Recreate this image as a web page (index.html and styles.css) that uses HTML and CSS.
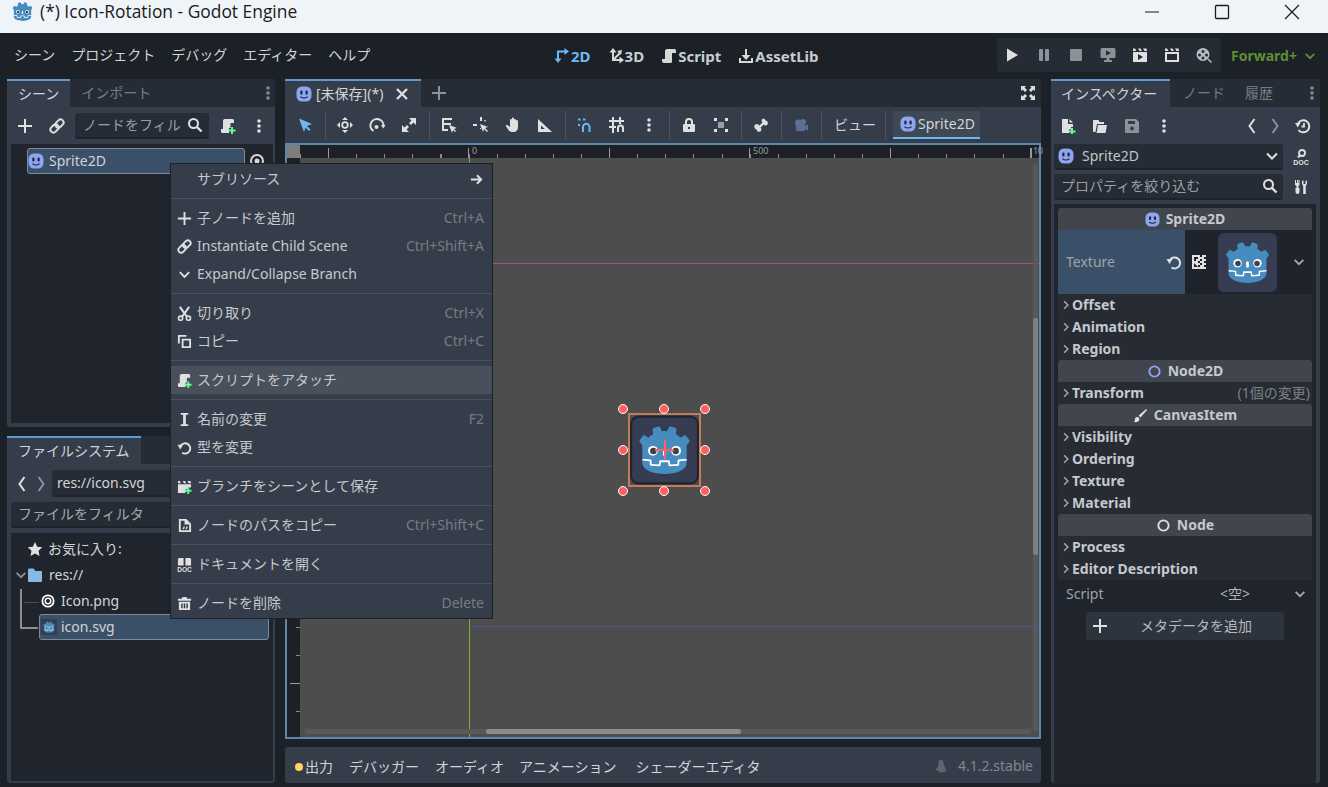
FILE: index.html
```html
<!DOCTYPE html>
<html lang="ja">
<head>
<meta charset="utf-8">
<title>(*) Icon-Rotation - Godot Engine</title>
<link rel="stylesheet" href="styles.css">
</head>
<body>
<svg class="defs" aria-hidden="true">
  <defs>
    <symbol id="godot" viewBox="0 0 128 128">
      <g transform="scale(.101) translate(122 122)">
        <g fill="#fff">
          <path d="M105 673v33q407 354 814 0v-33z"/>
          <path fill="#478cbf" d="m105 673 152 14q12 1 15 14l4 67 132 10 8-61q2-11 15-15h162q13 4 15 15l8 61 132-10 4-67q3-13 15-14l152-14V427q30-39 56-81-35-59-83-108-43 20-82 47-40-37-88-64 7-51 8-102-59-28-123-42-26 43-46 89-49-7-98 0-20-46-46-89-64 14-123 42 1 51 8 102-48 27-88 64-39-27-82-47-48 49-83 108 26 42 56 81zm0 33v39c0 276 813 276 814 0v-39l-134 12-5 69q-2 10-14 13l-162 11q-12 0-16-11l-10-65H446l-10 65q-4 11-16 11l-162-11q-12-3-14-13l-5-69z"/>
          <path d="M483 600c0 34 58 34 58 0v-86c0-34-58-34-58 0z"/>
          <circle cx="725" cy="526" r="90"/>
          <circle cx="299" cy="526" r="90"/>
        </g>
        <g fill="#414042"><circle cx="307" cy="532" r="60"/><circle cx="717" cy="532" r="60"/></g>
      </g>
    </symbol>
    <symbol id="sprite" viewBox="0 0 16 16">
      <rect x=".5" y=".5" width="15" height="15" rx="5.500" fill="#8da5f3"/>
      <rect x="4.300" y="4.500" width="2.200" height="4" rx="1.100" fill="#20252d"/>
      <rect x="9.500" y="4.500" width="2.200" height="4" rx="1.100" fill="#20252d"/>
      <path d="M4.400 10.600q3.600 2.800 7.200 0" fill="none" stroke="#20252d" stroke-width="1.200"/>
    </symbol>
    <symbol id="plus" viewBox="0 0 16 16"><path fill="currentColor" d="M7 1h2v6h6v2H9v6H7V9H1V7h6z"/></symbol>
    <symbol id="link" viewBox="0 0 16 16"><g transform="rotate(-45 8 8)" fill="none" stroke="currentColor" stroke-width="2"><rect x="0" y="5" width="9" height="6" rx="3"/><rect x="7" y="5" width="9" height="6" rx="3"/></g></symbol>
    <symbol id="search" viewBox="0 0 16 16"><circle cx="6.500" cy="6.500" r="4.500" fill="none" stroke="currentColor" stroke-width="2"/><path d="M10 10l4.500 4.500" stroke="currentColor" stroke-width="2.400"/></symbol>
    <symbol id="dots" viewBox="0 0 16 16"><circle cx="8" cy="3" r="1.800" fill="currentColor"/><circle cx="8" cy="8" r="1.800" fill="currentColor"/><circle cx="8" cy="13" r="1.800" fill="currentColor"/></symbol>
    <symbol id="script" viewBox="0 0 16 16"><path fill="currentColor" d="M6 1h7.500A1.500 1.500 0 0 1 15 2.500V5h-4v8.500a1.500 1.500 0 0 1-1.500 1.500H3a2 2 0 0 1-2-2V11h3V3a2 2 0 0 1 2-2z"/></symbol>
    <symbol id="script-add" viewBox="0 0 16 16"><path fill="currentColor" d="M5 1h7.500A1.500 1.500 0 0 1 14 2.500V5h-3.500v5H9v5H2.500A1.500 1.500 0 0 1 1 13.500V11h2V3a2 2 0 0 1 2-2z"/><path fill="#5fff8f" d="M11 9h2v2.500h2.500v2H13V16h-2v-2.500H8.500v-2H11z"/></symbol>
    <symbol id="eye" viewBox="0 0 16 16"><circle cx="8" cy="8" r="6" fill="none" stroke="currentColor" stroke-width="2"/><circle cx="8" cy="8" r="2.500" fill="currentColor"/></symbol>
    <symbol id="select" viewBox="0 0 16 16"><path fill="#6bb8f5" d="M2 1.500 15 7l-5 2 3.500 3.500-1.500 1.500L8.500 10.500 7 15z"/></symbol>
    <symbol id="move" viewBox="0 0 16 16"><path fill="currentColor" d="M8 0l3 3H5zM8 16l-3-3h6zM0 8l3-3v6zM16 8l-3 3V5z"/><circle cx="8" cy="8" r="2.800" fill="none" stroke="currentColor" stroke-width="1.800"/></symbol>
    <symbol id="rotate" viewBox="0 0 16 16"><path d="M4.500 14A6.500 6.500 0 1 1 14.400 9.500" fill="none" stroke="currentColor" stroke-width="2"/><path fill="currentColor" d="M12 8h4.500l-2.200 3.500z"/><circle cx="7.500" cy="10" r="2" fill="currentColor"/></symbol>
    <symbol id="scale" viewBox="0 0 16 16"><path fill="currentColor" d="M8 1h7v7l-2.500-2.500L10 8 8 6l2.500-2.500zM8 15H1V8l2.500 2.500L6 8l2 2-2.500 2.500z"/></symbol>
    <symbol id="list" viewBox="0 0 16 16"><path fill="currentColor" d="M1 1h10v2H3v3h7v2H3v4h4v2H1z"/><path fill="currentColor" d="M8 8l8 3-3 1 2 2-1 1-2-2-1 3z"/></symbol>
    <symbol id="pivot" viewBox="0 0 16 16"><path fill="currentColor" d="M7 0h2v4H7zM0 7h4v2H0zM7 11h1v1H7z"/><path fill="currentColor" d="M7 7l8 3-3 1 3 3-1 1-3-3-1 3z"/><path fill="currentColor" d="M11 3l2 0-1 2z"/></symbol>
    <symbol id="hand" viewBox="0 0 16 16"><path fill="currentColor" d="M5 3a1 1 0 0 1 2 0V1.500a1 1 0 0 1 2 0V3a1 1 0 0 1 2 0v1a1 1 0 0 1 2 0v6.500c0 2.500-2 4.500-4.500 4.500H7c-1.500 0-2.500-.6-3.300-1.700L1 9.500c-.6-1 .9-2 1.700-1.200L5 10z"/></symbol>
    <symbol id="ruler" viewBox="0 0 16 16"><path fill="currentColor" fill-rule="evenodd" d="M1 2l14 13H1zM4 8.500V12h3.800z"/></symbol>
    <symbol id="snap" viewBox="0 0 16 16"><path d="M6 15V10a3 3 0 0 1 6.500 0v5" fill="none" stroke="#6bb8f5" stroke-width="2"/><path fill="#6bb8f5" d="M1 1.500h2.500v2H1zM6 1.500h2.500v2H6zM1 7h2v2H1z"/></symbol>
    <symbol id="grid" viewBox="0 0 16 16"><path fill="currentColor" d="M3 0h2v3h5V0h2v3h3v2h-3v2h-2V5H5v4h2v2H5v5H3v-5H0V9h3V5H0V3h3z"/><path d="M9 15v-4a2.500 2.500 0 0 1 5 0v4" fill="none" stroke="currentColor" stroke-width="2"/></symbol>
    <symbol id="lock" viewBox="0 0 16 16"><path fill="currentColor" fill-rule="evenodd" d="M4 7V5a4 4 0 0 1 8 0v2h1a1 1 0 0 1 1 1v6a1 1 0 0 1-1 1H3a1 1 0 0 1-1-1V8a1 1 0 0 1 1-1zM6 7h4V5a2 2 0 0 0-4 0zM7 10v2h2v-2z"/></symbol>
    <symbol id="group" viewBox="0 0 16 16"><path fill="currentColor" d="M1 1h3v3H1zM12 1h3v3h-3zM1 12h3v3H1zM12 12h3v3h-3z"/><path fill="currentColor" opacity=".6" d="M5 5h6v6H5z"/></symbol>
    <symbol id="bone" viewBox="0 0 16 16"><path fill="currentColor" d="M10.500 1.500a2.500 2.500 0 0 1 2 2 2.500 2.500 0 0 1 1 4.700c-1 .5-2.200.1-2.800-.7L7.500 10.700c.8.600 1.200 1.800.7 2.800a2.500 2.500 0 0 1-4.700-1 2.500 2.500 0 0 1-2-2 2.500 2.500 0 0 1 4.700-1.800l3.300-3.200c-.8-.6-1.200-1.800-.7-2.800a2.500 2.500 0 0 1 1.700-1.200z"/></symbol>
    <symbol id="camera" viewBox="0 0 16 16"><g fill="#5d6e96"><circle cx="5.500" cy="6" r="3.500"/><circle cx="10" cy="5" r="3"/><rect x="3" y="7" width="9" height="7" rx="1"/><path d="M12 9l3-1.500v6L12 12z"/></g></symbol>
    <symbol id="i2d" viewBox="0 0 16 16"><path fill="none" stroke="#6bb8f5" stroke-width="2" d="M4 12V3.500h8"/><path fill="#6bb8f5" d="M0.500 10.500h7L4 15zM10.500 0l4.500 3.500-4.500 3.500z"/></symbol>
    <symbol id="i3d" viewBox="0 0 16 16"><path fill="none" stroke="currentColor" stroke-width="2" d="M5 3v9h8M5 12l7-7"/><path fill="currentColor" d="M5 0l3.500 4.500h-7zM16 12l-4.500 3.500v-7zM14 2l-1 5-4-4z"/></symbol>
    <symbol id="asset" viewBox="0 0 16 16"><path fill="currentColor" d="M7 1h2v6h3.500L8 12 3.500 7H7zM1 10h2v3h10v-3h2v5H1z"/></symbol>
    <symbol id="full" viewBox="0 0 16 16"><path fill="currentColor" d="M1 1h5L4.500 2.500 7 5 5 7 2.500 4.500 1 6zM15 1v5l-1.500-1.500L11 7 9 5l2.500-2.500L10 1zM1 15v-5l1.500 1.500L5 9l2 2-2.500 2.500L6 15zM15 15h-5l1.500-1.500L9 11l2-2 2.500 2.500L15 10z"/></symbol>
    <symbol id="play" viewBox="0 0 16 16"><path fill="currentColor" d="M3 1.500v13L14 8z"/></symbol>
    <symbol id="pause" viewBox="0 0 16 16"><rect x="3" y="2" width="4" height="12" rx="1" fill="currentColor"/><rect x="9" y="2" width="4" height="12" rx="1" fill="currentColor"/></symbol>
    <symbol id="stop" viewBox="0 0 16 16"><rect x="2" y="2" width="12" height="12" rx="1" fill="currentColor"/></symbol>
    <symbol id="remote" viewBox="0 0 16 16"><path fill="currentColor" fill-rule="evenodd" d="M2 1h12a1.500 1.500 0 0 1 1.500 1.500v7A1.500 1.500 0 0 1 14 11H9.500v2H12v2H4v-2h2.500v-2H2A1.500 1.500 0 0 1 .5 9.500v-7A1.500 1.500 0 0 1 2 1zM6 3.500v5L11 6z"/></symbol>
    <symbol id="pscene" viewBox="0 0 16 16"><path fill="currentColor" fill-rule="evenodd" d="M1 5h14v10H1zM6 7v6l5-3z"/><path fill="currentColor" d="M1 1.500h2l1.500 2.500H1zM6 1.500h2.500L10 4H7.500zM11 1.500h3.500L15 4h-2.500z"/></symbol>
    <symbol id="pcustom" viewBox="0 0 16 16"><path fill="currentColor" fill-rule="evenodd" d="M1 5h14v10H1zM3 7v6h10V7z"/><path fill="currentColor" d="M1 1.500h2l1.500 2.500H1zM6 1.500h2.500L10 4H7.500zM11 1.500h3.500L15 4h-2.500z"/></symbol>
    <symbol id="movie" viewBox="0 0 16 16"><path fill="currentColor" fill-rule="evenodd" d="M7 1a6.500 6.500 0 1 1 0 13A6.500 6.500 0 0 1 7 1zM7 3a1.500 1.500 0 1 0 0 3 1.500 1.500 0 0 0 0-3zM3.500 6.500a1.500 1.500 0 1 0 0 3 1.500 1.500 0 0 0 0-3zM10.500 6.500a1.500 1.500 0 1 0 0 3 1.500 1.500 0 0 0 0-3zM7 9.500a1.500 1.500 0 1 0 0 3 1.500 1.500 0 0 0 0-3z"/><path stroke="currentColor" stroke-width="1.500" d="M12 12l3.500 3.500"/></symbol>
    <symbol id="down" viewBox="0 0 16 16"><path fill="none" stroke="currentColor" stroke-width="2" d="M3 5.500l5 5 5-5"/></symbol>
    <symbol id="small-right" viewBox="0 0 16 16"><path fill="none" stroke="currentColor" stroke-width="2" d="M5.500 3l5 5-5 5"/></symbol>
    <symbol id="back" viewBox="0 0 16 16"><path fill="none" stroke="currentColor" stroke-width="2" d="M10.500 1 5.500 8l5 7"/></symbol>
    <symbol id="forward" viewBox="0 0 16 16"><path fill="none" stroke="currentColor" stroke-width="2" d="M5.500 1l5 7-5 7"/></symbol>
    <symbol id="newres" viewBox="0 0 16 16"><path fill="currentColor" d="M2 1h6v5h5v3h-2v2.500H9V15H2zM9.500 1 13 4.500H9.500z"/><path fill="#5fff8f" d="M11 10h2v2.500h2.500v2H13V16h-2v-1.500H9v-2h2z"/></symbol>
    <symbol id="folder" viewBox="0 0 16 16"><path fill="currentColor" d="M2 2h4.500l1 2H12v2H5L3.500 14H2a1 1 0 0 1-1-1V3a1 1 0 0 1 1-1zM6 7h9l-1.500 8H4.500z"/></symbol>
    <symbol id="save" viewBox="0 0 16 16"><path fill="currentColor" fill-rule="evenodd" d="M2 1h10l3 3v10a1 1 0 0 1-1 1H2a1 1 0 0 1-1-1V2a1 1 0 0 1 1-1zM4 3v3h7V3zM8 8.500a2 2 0 1 0 0 4 2 2 0 0 0 0-4z"/></symbol>
    <symbol id="history" viewBox="0 0 16 16"><path d="M3 5.500A6 6 0 1 1 3.500 12" fill="none" stroke="currentColor" stroke-width="2"/><path fill="currentColor" d="M0 5h5.500L2.800 9.500z"/><path d="M9 5v3.500H6.500" fill="none" stroke="currentColor" stroke-width="1.800"/></symbol>
    <symbol id="doc" viewBox="0 0 16 16"><circle cx="9" cy="4" r="3" fill="none" stroke="currentColor" stroke-width="1.800"/><path d="M6.800 6.500 5 8.500" stroke="currentColor" stroke-width="2"/><text x="8" y="15.500" text-anchor="middle" font-family="Liberation Sans" font-size="7" font-weight="700" fill="currentColor">DOC</text></symbol>
    <symbol id="tools" viewBox="0 0 16 16"><path fill="currentColor" d="M2 1h1v3h1V1h1v3h.5V1h1v5L5.500 7v2h1v4a2 2 0 0 1-4 0V9h1V7L2 6z"/><path fill="currentColor" d="M9.500 1.500h1V5h2V1.500h1c1 1.500.8 4-.7 5.200V15h-2.600V6.700C8.700 5.500 8.500 3 9.500 1.500z"/></symbol>
    <symbol id="reload" viewBox="0 0 16 16"><path d="M4 6a5.500 5.500 0 1 1 1.500 7.500" fill="none" stroke="currentColor" stroke-width="2"/><path fill="currentColor" d="M.5 5h6L3.500 10z"/></symbol>
    <symbol id="checker" viewBox="0 0 16 16"><path fill="currentColor" d="M1 1h8v2h2V1h4v2h-2v2h2v2h-2v2h2v2h-2v2h2v2H1z"/><path fill="#20252d" d="M3 3h4v2H5v2H3zM9 5h2v2H9zM7 7h2v2H7zM9 9h2v2H9zM7 11h2v2H7zM3 9l4 4H3z"/></symbol>
    <symbol id="scissors" viewBox="0 0 16 16"><path d="M3 1l8 11M13 1 5 12" stroke="currentColor" stroke-width="2.200" fill="none"/><circle cx="3.800" cy="13" r="2.200" fill="none" stroke="currentColor" stroke-width="1.800"/><circle cx="12.200" cy="13" r="2.200" fill="none" stroke="currentColor" stroke-width="1.800"/></symbol>
    <symbol id="copy" viewBox="0 0 16 16"><path fill="currentColor" fill-rule="evenodd" d="M1 1h9v2H3v7H1zM5 5h10v10H5zM7 7v6h6V7z"/></symbol>
    <symbol id="rename" viewBox="0 0 16 16"><path fill="currentColor" d="M4 1h8v2H9.500v10H12v2H4v-2h2.500V3H4z"/></symbol>
    <symbol id="instance" viewBox="0 0 16 16"><path fill="currentColor" d="M1 5.500h14V9h-3v2H9v4H1z"/><path fill="currentColor" d="M1 2h2l1.200 2.500H1zM6 2h2.500L10 4.500H7.500zM11 2h3.500l.5 2.500h-2.500z"/><path fill="#5fff8f" d="M11 9h2v2.500h2.500v2H13V16h-2v-2.500H8.500v-2H11z"/></symbol>
    <symbol id="copypath" viewBox="0 0 16 16"><path fill="currentColor" fill-rule="evenodd" d="M2 1h8l5 5v9H2zM4 3v10h9V7H8V3z"/><path fill="currentColor" d="M6 12l1-3h1.500l-1 3zM9 12l1-3h1.500l-1 3z"/></symbol>
    <symbol id="docs" viewBox="0 0 16 16"><path fill="currentColor" d="M2 1h5v8H1V2zM9 1h5l1 1v7H9z"/><text x="8" y="15.500" text-anchor="middle" font-family="Liberation Sans" font-size="7" font-weight="700" fill="currentColor">DOC</text></symbol>
    <symbol id="trash" viewBox="0 0 16 16"><path fill="currentColor" fill-rule="evenodd" d="M6 1h4l1 2h4v2H1V3h4zM2 6h12v9H2zM4.500 8v5h1.500V8zM7.200 8v5h1.600V8zM10 8v5h1.500V8z"/></symbol>
    <symbol id="star" viewBox="0 0 16 16"><path fill="currentColor" d="M8 1l2.200 4.700 5.100.6-3.800 3.500 1 5.100L8 12.400l-4.500 2.500 1-5.100L.7 6.300l5.100-.6z"/></symbol>
    <symbol id="dirs" viewBox="0 0 16 16"><path fill="#8ab8e0" d="M1 2.500A1 1 0 0 1 2 1.500h4.500l2 2.500H15v10a1 1 0 0 1-1 1H2a1 1 0 0 1-1-1z"/></symbol>
    <symbol id="target" viewBox="0 0 16 16"><circle cx="8" cy="8" r="7.500" fill="#fff"/><circle cx="8" cy="8" r="5.500" fill="#20252d"/><circle cx="8" cy="8" r="4" fill="#fff"/><circle cx="8" cy="8" r="2.400" fill="#20252d"/></symbol>
    <symbol id="ring" viewBox="0 0 16 16"><circle cx="8" cy="8" r="5.500" fill="none" stroke="currentColor" stroke-width="2"/></symbol>
    <symbol id="brush" viewBox="0 0 16 16"><path fill="currentColor" d="M14 1l1 1-7 8-2-2zM4.500 9.500a2.500 2.500 0 0 1 2.400 2.400C7 14 4 15.500 1 15c1-1 1-2 1-3a2.500 2.500 0 0 1 2.500-2.500z"/></symbol>
    <symbol id="bell" viewBox="0 0 16 16"><path fill="currentColor" d="M6 1c3-1 5 1 5 4 0 3 3 5 3 8-3 3-6 2-8 2-1-1-1-2-2-2-2 0-2-1-2-2 2-1 3-2 3-4 0-3 0-5 1-6z"/></symbol>
    <symbol id="min" viewBox="0 0 16 16"><path d="M1 8h14" stroke="currentColor" stroke-width="1"/></symbol>
    <symbol id="max" viewBox="0 0 16 16"><rect x="1.500" y="1.500" width="13" height="13" rx="1" fill="none" stroke="currentColor" stroke-width="1.300"/></symbol>
    <symbol id="close" viewBox="0 0 16 16"><path d="M1 1l14 14M15 1 1 15" stroke="currentColor" stroke-width="1.200"/></symbol>
    <symbol id="closex" viewBox="0 0 16 16"><path d="M3 3l10 10M13 3 3 13" stroke="currentColor" stroke-width="2.300"/></symbol>
    <symbol id="arrow-r" viewBox="0 0 16 16"><path fill="none" stroke="currentColor" stroke-width="2" d="M2 8h10M8.500 3.500 13 8l-4.500 4.500"/></symbol>
    <symbol id="godot-card" viewBox="0 0 128 128">
      <rect x="2" y="2" width="124" height="124" rx="14" fill="#363d52" stroke="#212532" stroke-width="4"/>
      <use href="#godot"/>
    </symbol>
  </defs>
</svg>

<header class="titlebar">
  <svg class="title-logo"><use href="#godot"/></svg>
  <span class="title-text">(*) Icon-Rotation - Godot Engine</span>
  <div class="window-buttons">
    <svg class="ic"><use href="#min"/></svg>
    <svg class="ic"><use href="#max"/></svg>
    <svg class="ic"><use href="#close"/></svg>
  </div>
</header>

<nav class="menubar">
  <div class="menus">
    <span class="menu">シーン</span><span class="menu">プロジェクト</span><span class="menu">デバッグ</span><span class="menu">エディター</span><span class="menu">ヘルプ</span>
  </div>
  <div class="workspaces">
    <span class="ws ws-on"><svg class="ic"><use href="#i2d"/></svg>2D</span>
    <span class="ws"><svg class="ic"><use href="#i3d"/></svg>3D</span>
    <span class="ws"><svg class="ic"><use href="#script"/></svg>Script</span>
    <span class="ws"><svg class="ic"><use href="#asset"/></svg>AssetLib</span>
  </div>
  <div class="runbar">
    <svg class="ic"><use href="#play"/></svg>
    <svg class="ic dim"><use href="#pause"/></svg>
    <svg class="ic dim"><use href="#stop"/></svg>
    <svg class="ic dim"><use href="#remote"/></svg>
    <svg class="ic"><use href="#pscene"/></svg>
    <svg class="ic"><use href="#pcustom"/></svg>
    <svg class="ic dim2"><use href="#movie"/></svg>
  </div>
  <div class="renderer"><span>Forward+</span><svg class="ic"><use href="#down"/></svg></div>
</nav>

<main class="main">
  <section class="col-left">
    <div class="dock scene-dock">
      <div class="tabs">
        <span class="tab tab-on">シーン</span><span class="tab">インポート</span>
        <svg class="ic tab-dots"><use href="#dots"/></svg>
      </div>
      <div class="dock-body">
        <div class="scene-tools">
          <svg class="ic"><use href="#plus"/></svg>
          <svg class="ic"><use href="#link"/></svg>
          <div class="field scene-filter"><span>ノードをフィル</span><svg class="ic"><use href="#search"/></svg></div>
          <svg class="ic"><use href="#script-add"/></svg>
          <svg class="ic scene-more"><use href="#dots"/></svg>
        </div>
        <div class="tree scene-tree">
          <div class="row-sel scene-row"><svg class="ic"><use href="#sprite"/></svg><span>Sprite2D</span></div>
          <svg class="ic scene-eye"><use href="#eye"/></svg>
        </div>
      </div>
    </div>
    <div class="dock fs-dock">
      <div class="tabs">
        <span class="tab tab-on">ファイルシステム</span>
      </div>
      <div class="dock-body">
        <div class="path-row">
          <svg class="ic"><use href="#back"/></svg>
          <svg class="ic dim"><use href="#forward"/></svg>
          <div class="field path-field"><span>res://icon.svg</span></div>
        </div>
        <div class="field fs-filter"><span>ファイルをフィルタ</span></div>
        <div class="tree fs-tree">
          <div class="fs-row fs-fav"><svg class="ic"><use href="#star"/></svg><span>お気に入り:</span></div>
          <div class="fs-row fs-res"><svg class="ic dim fs-arrow"><use href="#down"/></svg><svg class="ic fs-dir"><use href="#dirs"/></svg><span>res://</span></div>
          <div class="fs-row fs-file"><svg class="ic fs-target"><use href="#target"/></svg><span>Icon.png</span></div>
          <div class="row-sel fs-file-sel"><span class="mini-thumb"><svg><use href="#godot"/></svg></span><span>icon.svg</span></div>
          <i class="tline tline-v"></i><i class="tline tline-h"></i><i class="tline tline-dim"></i>
        </div>
      </div>
    </div>
  </section>

  <section class="col-center">
    <div class="dock editor-dock">
      <div class="tabs">
        <span class="tab tab-on tab-file"><svg class="ic"><use href="#sprite"/></svg><span>[未保存](*)</span><svg class="ic tab-close"><use href="#closex"/></svg></span>
        <svg class="ic tab-plus"><use href="#plus"/></svg>
        <svg class="ic tab-full"><use href="#full"/></svg>
      </div>
      <div class="toolbar">
        <svg class="ic"><use href="#select"/></svg><i class="sep"></i>
        <svg class="ic"><use href="#move"/></svg>
        <svg class="ic"><use href="#rotate"/></svg>
        <svg class="ic"><use href="#scale"/></svg><i class="sep"></i>
        <svg class="ic"><use href="#list"/></svg>
        <svg class="ic"><use href="#pivot"/></svg>
        <svg class="ic"><use href="#hand"/></svg>
        <svg class="ic"><use href="#ruler"/></svg><i class="sep"></i>
        <svg class="ic"><use href="#snap"/></svg>
        <svg class="ic"><use href="#grid"/></svg>
        <svg class="ic"><use href="#dots"/></svg><i class="sep"></i>
        <svg class="ic"><use href="#lock"/></svg>
        <svg class="ic"><use href="#group"/></svg><i class="sep"></i>
        <svg class="ic"><use href="#bone"/></svg><i class="sep"></i>
        <svg class="ic"><use href="#camera"/></svg><i class="sep"></i>
        <span class="view-btn">ビュー</span><i class="sep"></i>
        <span class="sprite-btn"><svg class="ic"><use href="#sprite"/></svg>Sprite2D</span>
      </div>
      <div class="viewport">
        <div class="ruler-row">
          <div class="ruler-corner"></div>
          <div class="ruler-top">
            <span class="rlabel rl0">0</span><span class="rlabel rl500">500</span><span class="rlabel rl1000">10</span>
          </div>
        </div>
        <div class="canvas-row">
          <div class="ruler-left"></div>
          <div class="canvas">
            <i class="axis-x"></i><i class="axis-y"></i><i class="frame-b"></i>
            <div class="vscroll"><i></i></div>
            <div class="hscroll"><i></i></div>
            <div class="gizmo">
              <div class="gizmo-box"><svg class="gizmo-icon"><use href="#godot-card"/></svg></div>
              <i class="cross-h"></i><i class="cross-v"></i>
              <i class="h h1"></i><i class="h h2"></i><i class="h h3"></i><i class="h h4"></i><i class="h h5"></i><i class="h h6"></i><i class="h h7"></i><i class="h h8"></i>
            </div>
          </div>
        </div>
      </div>
    </div>
    <div class="bottom-bar">
      <i class="dot"></i><span class="btab">出力</span><span class="btab">デバッガー</span><span class="btab">オーディオ</span><span class="btab btab-anim">アニメーション</span><span class="btab btab-shader">シェーダーエディタ</span>
      <span class="version"><svg class="ic"><use href="#bell"/></svg><span>4.1.2.stable</span></span>
    </div>
  </section>

  <section class="col-right dock">
    <div class="tabs">
      <span class="tab tab-on">インスペクター</span><span class="tab">ノード</span><span class="tab">履歴</span>
      <svg class="ic tab-dots"><use href="#dots"/></svg>
    </div>
    <div class="dock-body insp-body">
      <div class="insp-tools">
        <svg class="ic"><use href="#newres"/></svg>
        <svg class="ic"><use href="#folder"/></svg>
        <svg class="ic dim"><use href="#save"/></svg>
        <svg class="ic"><use href="#dots"/></svg>
        <span class="spacer"></span>
        <svg class="ic"><use href="#back"/></svg>
        <svg class="ic dim"><use href="#forward"/></svg>
        <svg class="ic"><use href="#history"/></svg>
      </div>
      <div class="insp-line">
        <div class="field obj-field"><svg class="ic"><use href="#sprite"/></svg><span>Sprite2D</span><svg class="ic"><use href="#down"/></svg></div>
        <svg class="ic"><use href="#doc"/></svg>
      </div>
      <div class="insp-line">
        <div class="field prop-field"><span>プロパティを絞り込む</span><svg class="ic"><use href="#search"/></svg></div>
        <svg class="ic"><use href="#tools"/></svg>
      </div>
      <div class="props">
        <div class="cat"><svg class="ic"><use href="#sprite"/></svg><b>Sprite2D</b></div>
        <div class="tex-row">
          <div class="tex-label"><span>Texture</span><svg class="ic"><use href="#reload"/></svg></div>
          <div class="tex-value">
            <svg class="ic"><use href="#checker"/></svg>
            <span class="thumb"><svg><use href="#godot"/></svg></span>
            <svg class="ic chev"><use href="#down"/></svg>
          </div>
        </div>
        <div class="sec"><svg class="ic"><use href="#small-right"/></svg><b>Offset</b></div>
        <div class="sec"><svg class="ic"><use href="#small-right"/></svg><b>Animation</b></div>
        <div class="sec"><svg class="ic"><use href="#small-right"/></svg><b>Region</b></div>
        <div class="cat"><svg class="ic cat-blue"><use href="#ring"/></svg><b>Node2D</b></div>
        <div class="sec"><svg class="ic"><use href="#small-right"/></svg><b>Transform</b><span class="changes">(1個の変更)</span></div>
        <div class="cat"><svg class="ic"><use href="#brush"/></svg><b>CanvasItem</b></div>
        <div class="sec"><svg class="ic"><use href="#small-right"/></svg><b>Visibility</b></div>
        <div class="sec"><svg class="ic"><use href="#small-right"/></svg><b>Ordering</b></div>
        <div class="sec"><svg class="ic"><use href="#small-right"/></svg><b>Texture</b></div>
        <div class="sec"><svg class="ic"><use href="#small-right"/></svg><b>Material</b></div>
        <div class="cat"><svg class="ic"><use href="#ring"/></svg><b>Node</b></div>
        <div class="sec"><svg class="ic"><use href="#small-right"/></svg><b>Process</b></div>
        <div class="sec"><svg class="ic"><use href="#small-right"/></svg><b>Editor Description</b></div>
        <div class="script-row"><span class="script-label">Script</span><span class="script-value">&lt;空&gt;</span><svg class="ic chev"><use href="#down"/></svg></div>
        <div class="meta-btn"><svg class="ic"><use href="#plus"/></svg><span>メタデータを追加</span></div>
      </div>
    </div>
  </section>
</main>

<div class="ctx">
  <div class="ctx-item"><span class="ctx-ic"></span><span class="ctx-label">サブリソース</span><svg class="ic ctx-arrow"><use href="#arrow-r"/></svg></div>
  <hr>
  <div class="ctx-item"><svg class="ic"><use href="#plus"/></svg><span class="ctx-label">子ノードを追加</span><span class="key">Ctrl+A</span></div>
  <div class="ctx-item"><svg class="ic"><use href="#link"/></svg><span class="ctx-label">Instantiate Child Scene</span><span class="key">Ctrl+Shift+A</span></div>
  <div class="ctx-item"><svg class="ic"><use href="#down"/></svg><span class="ctx-label">Expand/Collapse Branch</span></div>
  <hr>
  <div class="ctx-item"><svg class="ic"><use href="#scissors"/></svg><span class="ctx-label">切り取り</span><span class="key">Ctrl+X</span></div>
  <div class="ctx-item"><svg class="ic"><use href="#copy"/></svg><span class="ctx-label">コピー</span><span class="key">Ctrl+C</span></div>
  <hr>
  <div class="ctx-item ctx-hover"><svg class="ic"><use href="#script-add"/></svg><span class="ctx-label">スクリプトをアタッチ</span></div>
  <hr>
  <div class="ctx-item"><svg class="ic"><use href="#rename"/></svg><span class="ctx-label">名前の変更</span><span class="key">F2</span></div>
  <div class="ctx-item"><svg class="ic"><use href="#reload"/></svg><span class="ctx-label">型を変更</span></div>
  <hr>
  <div class="ctx-item"><svg class="ic"><use href="#instance"/></svg><span class="ctx-label">ブランチをシーンとして保存</span></div>
  <hr>
  <div class="ctx-item"><svg class="ic"><use href="#copypath"/></svg><span class="ctx-label">ノードのパスをコピー</span><span class="key">Ctrl+Shift+C</span></div>
  <hr>
  <div class="ctx-item"><svg class="ic"><use href="#docs"/></svg><span class="ctx-label">ドキュメントを開く</span></div>
  <hr>
  <div class="ctx-item"><svg class="ic"><use href="#trash"/></svg><span class="ctx-label">ノードを削除</span><span class="key">Delete</span></div>
</div>
</body>
</html>
```
FILE: styles.css
```css
* { box-sizing: border-box; }
html, body { margin: 0; padding: 0; height: 100%; }
body {
  width: 1328px;
  height: 787px;
  overflow: hidden;
  position: relative;
  background: #1c2128;
  color: #d2d4d7;
  font-family: "Noto Sans", "Noto Sans CJK JP", sans-serif;
  font-size: 14px;
  line-height: 20px;
}
.defs { position: absolute; width: 0; height: 0; }
.ic { width: 16px; height: 16px; flex: none; color: #e0e0e0; display: block; }
.ic.dim { color: #8d9198; }
.ic.dim2 { color: #b8bbc0; }

/* title bar */
.titlebar {
  height: 33px;
  background: #eff4f9;
  color: #1b1b1b;
  display: flex;
  align-items: center;
  padding-left: 9px;
  padding-bottom: 11px;
}
.title-logo { width: 27px; height: 27px; margin-right: 4px; flex: none; }
.title-text { font-family: "Open Sans", sans-serif; font-size: 17.400px; line-height: 22px; }
.window-buttons {
  margin-left: auto;
  display: flex;
  gap: 54px;
  padding-right: 28px;
  padding-top: 1px;
}
.window-buttons .ic { color: #1b1b1b; }

/* menu bar */
.menubar {
  height: 46px;
  display: flex;
  align-items: center;
  padding-left: 6px;
  position: relative;
}
.menus { display: flex; width: 548px; padding-bottom: 2px; }
.menu { padding: 0 8px; }
.workspaces { display: flex; width: 443px; font-weight: 700; font-size: 15px; padding-bottom: 1px; gap: 17px; }
.ws { display: flex; align-items: center; gap: 1px; color: #c9ccd1; }
.ws .ic { color: #d8d8d8; }
.ws-on { color: #6bb8f5; }
.runbar {
  width: 224px;
  height: 34px;
  margin-top: -2px;
  background: #262c35;
  border-radius: 3px;
  display: flex;
  align-items: center;
  gap: 16px;
  padding-left: 7px;
}
.renderer {
  display: flex;
  align-items: center;
  gap: 6px;
  margin-left: 10px;
  font-weight: 700;
  color: #5c8f33;
}
.renderer .ic { color: #5c8f33; width: 14px; height: 14px; }

/* main */
.main {
  display: flex;
  gap: 10px;
  padding-left: 7px;
  height: 704px;
}
.col-left { width: 268px; display: flex; flex-direction: column; gap: 9px; }
.col-center { width: 756px; display: flex; flex-direction: column; gap: 8px; }
.col-right { width: 269px; }

.dock { display: flex; flex-direction: column; background: #363d4a; border-radius: 3px; }
.scene-dock { height: 348px; }
.fs-dock { height: 347px; }
.editor-dock { height: 660px; }
.tabs {
  height: 28px;
  flex: none;
  display: flex;
  align-items: stretch;
  background: #262c36;
  position: relative;
}
.tab {
  display: flex;
  align-items: center;
  padding: 0 11px;
  color: #777c84;
}
.tab-on {
  background: #363d4a;
  color: #d2d4d7;
  border-top: 2px solid #5a9bd5;
  padding-bottom: 1px;
}
.tab-dots { position: absolute; right: -1px; top: 6px; color: #868a91; }
.dock-body { flex: 1; min-height: 0; display: flex; flex-direction: column; position: relative; }
.field {
  background: #262c35;
  border-radius: 3px;
  border-bottom: 2px solid #1f242b;
  display: flex;
  align-items: center;
  color: #9b9fa5;
  height: 26px;
}

/* scene dock */
.scene-tools {
  height: 37px;
  display: flex;
  align-items: center;
  padding-left: 10px;
  gap: 16px;
}
.scene-filter {
  width: 134px;
  margin-left: -6px;
  padding: 0 6px 0 8px;
  justify-content: space-between;
  margin-right: -5px;
}
.scene-filter span { white-space: nowrap; overflow: hidden; }
.scene-more { margin-left: -1px; }
.tree { background: #20252d; position: relative; margin: 0 2px 4px 4px; flex: 1; }
.scene-tree { padding: 4px 0 0 16px; }
.row-sel {
  display: flex;
  align-items: center;
  background: #3a5068;
  border: 1px solid #7d8a98;
  border-radius: 3px;
}
.scene-row { width: 218px; height: 26px; gap: 5px; }
.scene-eye { position: absolute; left: 238px; top: 9px; color: #d8d8d8; }

/* filesystem dock */
.path-row {
  height: 34px;
  padding: 5px 0 0 7px;
  display: flex;
  align-items: center;
  gap: 3px;
}
.path-field { flex: 1; margin-right: 2px; padding-left: 5px; height: 27px; color: #d2d4d7; }
.fs-filter { margin: 4px 2px 0 4px; height: 26px; padding-left: 7px; color: #a6a9ae; flex: none; }
.fs-tree { margin-top: 5px; margin-bottom: 2px; padding-top: 4px; }
.fs-row { height: 26px; display: flex; align-items: center; }
.fs-row:first-child { margin-top: -1px; }
.fs-fav { padding-left: 16px; gap: 5px; }
.fs-res { padding-left: 3px; color: #d2d4d7; }
.fs-res span { margin-left: 6px; }
.fs-arrow { width: 14px; height: 14px; }
.fs-dir { margin-left: -1px; }
.fs-file { padding-left: 30px; gap: 6px; }
.fs-target { width: 14px; height: 14px; }
.fs-file-sel { margin-left: 28px; width: 230px; height: 26px; gap: 4px; padding-left: 1px; }
.mini-thumb { width: 16px; height: 16px; background: #363d52; display: block; }
.mini-thumb svg { width: 16px; height: 16px; display: block; }
.tline { position: absolute; display: block; background: #8a8f96; }
.tline-v { left: 9px; top: 56px; width: 2px; height: 40px; }
.tline-h { left: 9px; top: 94px; width: 18px; height: 2px; }
.tline-dim { left: 13px; top: 69px; width: 15px; height: 1px; background: #4a4f57; }

/* center */
.tab-file { width: 136px; padding: 0 0 1px 11px; gap: 4px; color: #d2d4d7; white-space: nowrap; }
.tab-close { margin-left: 7px; }
.tab-plus { align-self: center; margin-left: 10px; color: #8d9198; }
.tab-full { align-self: center; margin-left: auto; margin-right: 5px; }
.toolbar {
  height: 36px;
  flex: none;
  display: flex;
  align-items: center;
  padding-left: 12px;
  gap: 16px;
}
.toolbar .sep { width: 1px; height: 28px; background: #4b525e; margin: 0 -5px 0 -4px; flex: none; }
.view-btn { margin: 0 -3px 0 1px; white-space: nowrap; }
.sprite-btn {
  height: 28px;
  padding: 0 5px 0 7px;
  margin-left: -4px;
  display: flex;
  align-items: center;
  gap: 2px;
  background: #3f4855;
  border-bottom: 2px solid #6bb8f5;
  color: #d2d4d7;
}
.viewport {
  flex: 1;
  min-height: 0;
  border: 2px solid #5b86ad;
  background: #1d2127;
  display: flex;
  flex-direction: column;
}
.ruler-row { height: 13px; display: flex; flex: none; }
.ruler-corner { width: 13px; background: #7d7d7d; }
.ruler-top {
  flex: 1;
  position: relative;
  background:
    repeating-linear-gradient(90deg, #9a9a9a 0 1px, transparent 1px 140.500px) 28px 3px / 100% 10px no-repeat,
    repeating-linear-gradient(90deg, #8a8a8a 0 1px, transparent 1px 28.100px) 0 9px / 100% 4px no-repeat,
    #1d2127;
}
.rlabel { position: absolute; top: 0; font-size: 9px; line-height: 11px; color: #9a9a9a; }
.rl0 { left: 172px; }
.rl500 { left: 453px; }
.rl1000 { left: 733px; letter-spacing: -.5px; }
.canvas-row { flex: 1; display: flex; min-height: 0; }
.ruler-left {
  width: 13px;
  flex: none;
  background:
    repeating-linear-gradient(180deg, #9a9a9a 0 1px, transparent 1px 140px) 3px 105px / 10px 100% no-repeat,
    repeating-linear-gradient(180deg, #8a8a8a 0 1px, transparent 1px 28px) 9px 21px / 4px 100% no-repeat,
    #1d2127;
}
.canvas { flex: 1; position: relative; background: #4d4d4d; overflow: hidden; }
.axis-x { position: absolute; left: 0; right: 0; top: 105px; height: 1px; background: #a8508f; }
.axis-y { position: absolute; left: 169px; top: 0; bottom: 0; width: 1px; background: #7fb020; }
.frame-b { position: absolute; left: 170px; right: 0; top: 468px; height: 1px; background: #5050a8; }
.vscroll { position: absolute; right: 1px; top: 6px; bottom: 6px; width: 5px; border-radius: 3px; background: #595959; }
.vscroll i { display: block; position: absolute; left: 0; right: 0; top: 154px; height: 237px; border-radius: 3px; background: #808080; }
.hscroll { position: absolute; left: 5px; right: 8px; bottom: 3px; height: 5px; border-radius: 3px; background: #595959; }
.hscroll i { display: block; position: absolute; top: 0; bottom: 0; left: 181px; width: 255px; border-radius: 3px; background: #8c8c8c; }
.gizmo { position: absolute; left: 328px; top: 255px; width: 73px; height: 74px; }
.gizmo-box { width: 73px; height: 74px; border: 2px solid #c17d55; }
.gizmo-icon { width: 69px; height: 70px; display: block; }
.cross-h { position: absolute; left: 27px; top: 36px; width: 19px; height: 2px; background: #ff6060; }
.cross-v { position: absolute; left: 35.500px; top: 27px; width: 2px; height: 19px; background: #ff6060; }
.h { position: absolute; width: 10px; height: 10px; border-radius: 50%; background: #ff5f5f; border: 1.500px solid #fff; }
.h1 { left: -10px; top: -9px; }
.h2 { left: 31px; top: -9px; }
.h3 { left: 72px; top: -9px; }
.h4 { left: -10px; top: 32px; }
.h5 { left: 72px; top: 32px; }
.h6 { left: -10px; top: 73px; }
.h7 { left: 31px; top: 73px; }
.h8 { left: 72px; top: 73px; }

.bottom-bar {
  height: 36px;
  background: #363d4a;
  border-radius: 3px;
  display: flex;
  align-items: center;
  padding: 4px 0 0 10px;
  gap: 16px;
}
.dot { width: 8px; height: 8px; border-radius: 50%; background: #ffd45f; flex: none; margin-right: -14px; }
.btab-anim { margin-left: -1px; }
.btab-shader { margin-left: 3px; }
.version { margin: -2px 8px 0 auto; display: flex; align-items: center; gap: 10px; color: #83878e; }
.version .ic { color: #5f646c; width: 14px; height: 14px; }

/* inspector */
.insp-body { padding: 0 0 0 3px; }
.col-right .tab-on { padding: 0 10px 1px; width: 119px; }
.col-right .tab:nth-child(2) { padding: 0 10px 0 13px; }
.col-right .tab:nth-child(3) { padding: 0 0 0 10px; }
.col-right .tab-dots { right: 0; }
.insp-tools {
  height: 37px;
  display: flex;
  align-items: center;
  padding-left: 6px;
  padding-right: 9px;
  gap: 16px;
}
.insp-tools .spacer { flex: 1; }
.insp-tools .ic:nth-last-child(1) { margin-left: -4px; }
.insp-tools .ic:nth-last-child(2) { margin-left: -9px; }
.insp-line { height: 30px; display: flex; align-items: center; gap: 10px; padding-bottom: 4px; }
.insp-line .field { width: 229px; }
.obj-field { padding: 0 3px 0 4px; gap: 8px; color: #c2c5c9; }
.obj-field span { flex: 1; }
.prop-field { padding: 0 5px 0 7px; color: #9b9fa5; justify-content: space-between; }
.props {
  width: 262px;
  flex: 1;
  background: #20252d;
  padding: 4px;
}
.cat {
  height: 22px;
  background: #40454e;
  border-radius: 3px 3px 0 0;
  display: flex;
  align-items: center;
  justify-content: center;
  gap: 6px;
  color: #c5c8cc;
}
.cat b, .sec b { font-weight: 700; }
.cat-blue { color: #8da5f3; }
.cat .ic { width: 15px; height: 15px; }
.tex-row { height: 64px; display: flex; background: #1f242c; }
.tex-label {
  width: 127px;
  background: #3a5068;
  display: flex;
  align-items: center;
  justify-content: space-between;
  padding: 0 3px 0 8px;
  color: #9ea3aa;
}
.tex-value { flex: 1; display: flex; align-items: center; padding-left: 6px; position: relative; }
.thumb { width: 59px; height: 59px; margin-left: 11px; background: #363d52; border-radius: 6px; display: block; }
.thumb svg { width: 59px; height: 59px; display: block; }
.chev { width: 14px; height: 14px; color: #a6a9ae; }
.tex-value .chev { margin-left: 15px; }
.sec {
  height: 22px;
  background: #262b34;
  display: flex;
  align-items: center;
  color: #c5c8cc;
}
.sec .ic { width: 12px; height: 12px; margin-left: 2px; color: #a6a9ae; }
.changes { margin-left: auto; margin-right: 2px; color: #7c8087; }
.script-row { height: 28px; display: flex; align-items: center; padding-left: 8px; color: #9ea3aa; }
.script-label { width: 154px; }
.script-value { color: #b0b3b8; width: 73px; }
.meta-btn {
  width: 198px;
  height: 28px;
  margin: 4px 0 0 28px;
  background: #2e343e;
  border-radius: 3px;
  display: flex;
  align-items: center;
  padding-left: 6px;
  color: #b6b9be;
}
.meta-btn span { flex: 1; text-align: center; }

/* context menu */
.ctx {
  position: absolute;
  left: 170px;
  top: 163px;
  width: 323px;
  height: 456px;
  background: #363d4a;
  border: 1px solid #1c2128;
  padding: 1px 0;
}
.ctx hr { margin: 5px 0; height: 1px; border: 0; background: #4b525e; }
.ctx-item { height: 28px; display: flex; align-items: center; padding: 0 8px 0 6px; color: #c6c9cd; }
.ctx-item .ic { width: 15px; height: 15px; }
.ctx-ic { width: 15px; flex: none; }
.ctx-label { margin-left: 5px; flex: 1; white-space: nowrap; }
.key { color: #767b83; }
.ctx-hover { background: #4a505b; }
.ctx-arrow { width: 14px; height: 14px; }
```
